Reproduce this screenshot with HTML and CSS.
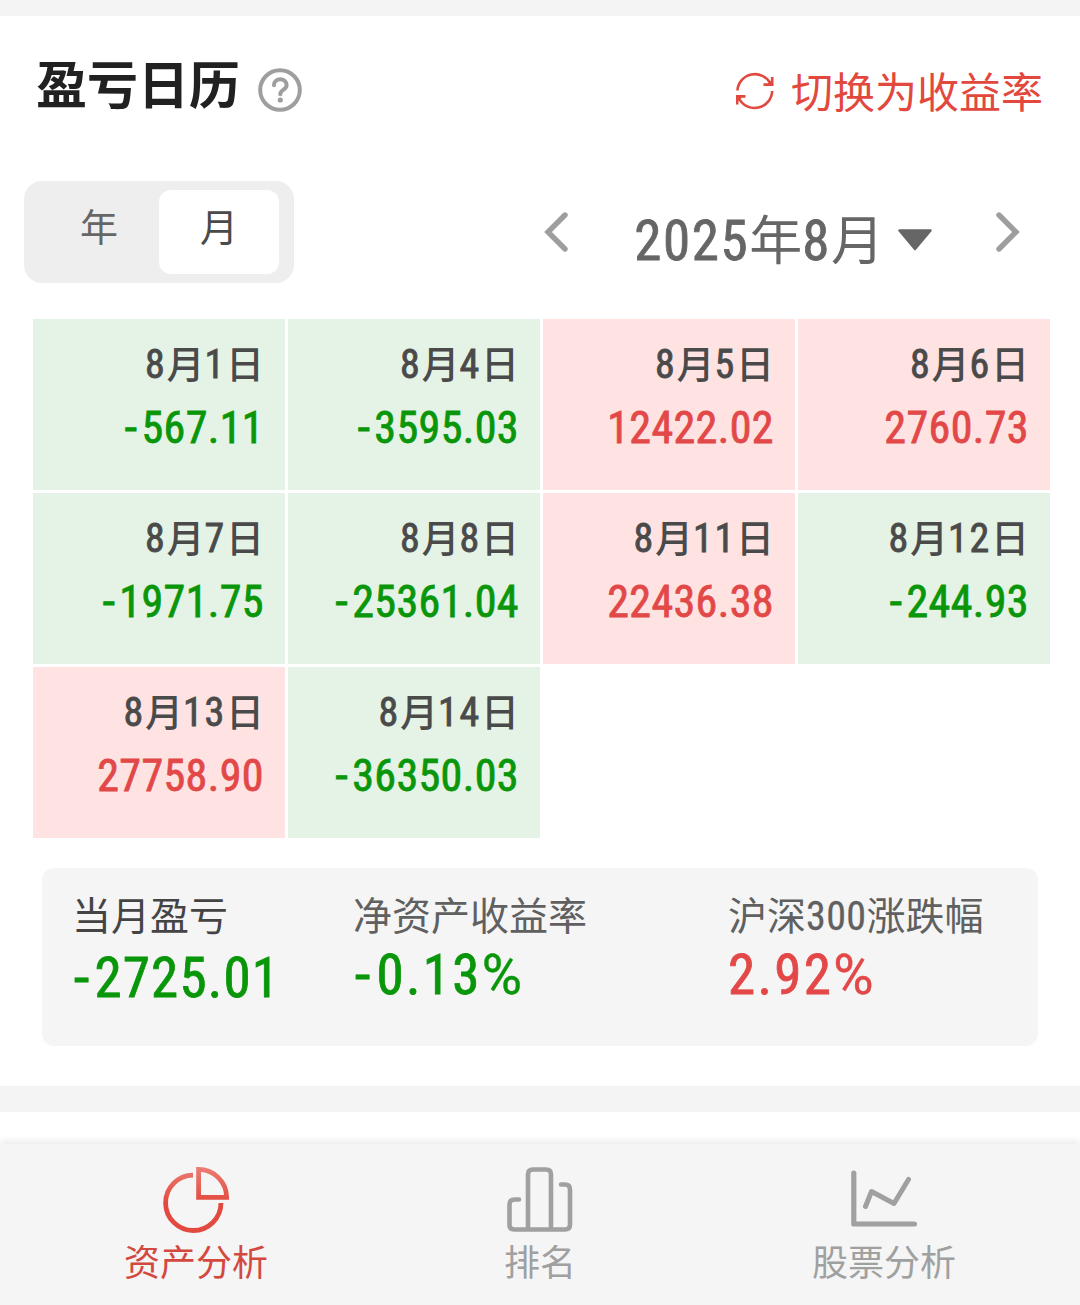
FILE: index.html
```html
<!DOCTYPE html>
<html lang="zh-CN">
<head>
  <meta charset="UTF-8">
  <meta name="viewport" content="width=device-width, initial-scale=1.0">
  <title>盈亏日历</title>
  <link rel="stylesheet" href="styles.css">
</head>
<body>
  <main class="card">
    <header class="card-header">
      <h1>盈亏日历</h1>
      <svg class="help-icon" viewBox="0 0 44 44" fill="none" stroke="#9e9e9e">
        <circle cx="22" cy="22" r="19.8" stroke-width="4"/>
        <path d="M16 17.2C16 9.4 28.6 9.4 28.6 17.2C28.6 21.8 22.3 21.4 22.3 26.2" stroke-width="4" stroke-linecap="round"/>
        <circle cx="22.3" cy="32" r="2.6" fill="#9e9e9e" stroke="none"/>
      </svg>
      <a class="switch-rate">
        <svg class="switch-icon" viewBox="0 0 38 38" fill="none" stroke="#e2483d" stroke-width="2.6">
          <path d="M1.4 18.5A17.6 17.6 0 0 1 34.5 11.5M36.2 5V12.6H27.5"/>
          <path d="M36.2 19A17.6 17.6 0 0 1 3 26.5M1.2 32.5V24.4H9.5"/>
          <path d="M36.2 7.5V12.6H30.5ZM1.2 29.8V24.4H7Z" fill="#e2483d" stroke="none"/>
        </svg>
        <span>切换为收益率</span>
      </a>
    </header>

    <div class="toolbar">
      <div class="segment">
        <button class="segment-item">年</button>
        <button class="segment-item active">月</button>
      </div>
      <div class="month-picker">
        <svg class="arrow" viewBox="0 0 24 40"><path d="M21 3L4 20L21 37"/></svg>
        <div class="month"><span class="num">2025</span>年<span class="num">8</span>月</div>
        <svg class="caret" viewBox="0 0 34 22"><path d="M1.5 1.5H32.5L17 20Z"/></svg>
        <svg class="arrow" viewBox="0 0 24 40"><path d="M3 3L20 20L3 37"/></svg>
      </div>
    </div>

    <div class="calendar">
      <div class="day loss">
        <div class="date"><span class="num">8</span>月<span class="num">1</span>日</div>
        <div class="amount"><span class="sign">-</span>567.11</div>
      </div>
      <div class="day loss">
        <div class="date"><span class="num">8</span>月<span class="num">4</span>日</div>
        <div class="amount"><span class="sign">-</span>3595.03</div>
      </div>
      <div class="day gain">
        <div class="date"><span class="num">8</span>月<span class="num">5</span>日</div>
        <div class="amount">12422.02</div>
      </div>
      <div class="day gain">
        <div class="date"><span class="num">8</span>月<span class="num">6</span>日</div>
        <div class="amount">2760.73</div>
      </div>
      <div class="day loss">
        <div class="date"><span class="num">8</span>月<span class="num">7</span>日</div>
        <div class="amount"><span class="sign">-</span>1971.75</div>
      </div>
      <div class="day loss">
        <div class="date"><span class="num">8</span>月<span class="num">8</span>日</div>
        <div class="amount"><span class="sign">-</span>25361.04</div>
      </div>
      <div class="day gain">
        <div class="date"><span class="num">8</span>月<span class="num">11</span>日</div>
        <div class="amount">22436.38</div>
      </div>
      <div class="day loss">
        <div class="date"><span class="num">8</span>月<span class="num">12</span>日</div>
        <div class="amount"><span class="sign">-</span>244.93</div>
      </div>
      <div class="day gain">
        <div class="date"><span class="num">8</span>月<span class="num">13</span>日</div>
        <div class="amount">27758.90</div>
      </div>
      <div class="day loss">
        <div class="date"><span class="num">8</span>月<span class="num">14</span>日</div>
        <div class="amount"><span class="sign">-</span>36350.03</div>
      </div>
    </div>

    <div class="summary">
      <div class="summary-item month-total loss">
        <div class="label">当月盈亏</div>
        <div class="total"><span class="sign">-</span>2725.01</div>
      </div>
      <div class="summary-item net-rate loss">
        <div class="label">净资产收益率</div>
        <div class="total rate"><span class="sign">-</span>0.13<span class="percent">%</span></div>
      </div>
      <div class="summary-item gain">
        <div class="label">沪深<span class="num">300</span>涨跌幅</div>
        <div class="total rate">2.92<span class="percent">%</span></div>
      </div>
    </div>
  </main>

  <nav class="tabbar">
    <a class="tab active">
      <svg viewBox="0 0 66 66" fill="none" stroke="url(#pieRed)" stroke-width="4.8">
        <defs>
          <linearGradient id="pieRed" gradientUnits="userSpaceOnUse" x1="0" y1="0" x2="0" y2="66">
            <stop offset="0" stop-color="#ec7d73"/>
            <stop offset="0.55" stop-color="#e2493f"/>
            <stop offset="1" stop-color="#e2493f"/>
          </linearGradient>
        </defs>
        <path d="M30 8.1A27.7 27.7 0 1 0 58 36"/>
        <path d="M35.6 2.4C51 2.4 63.6 15 63.6 30.4H35.6Z"/>
      </svg>
      <span>资产分析</span>
    </a>
    <a class="tab">
      <svg viewBox="0 0 66 66" fill="none" stroke="#a0a0a0" stroke-width="4.6" stroke-linecap="round">
        <path d="M12 32.5H7.5Q2.5 32.5 2.5 37.5V57.5Q2.5 62.5 7.5 62.5H58Q63 62.5 63 57.5V22.5Q63 17.5 58 17.5H54"/>
        <path d="M21 62V7.5Q21 2.5 26 2.5H39Q44 2.5 44 7.5V62"/>
      </svg>
      <span>排名</span>
    </a>
    <a class="tab">
      <svg viewBox="0 0 66 66" fill="none" stroke="#a0a0a0" stroke-width="5.2" stroke-linecap="round" stroke-linejoin="round">
        <path d="M2.8 6V57H63.5"/>
        <path d="M14.5 39.5L20.5 24.5L43 36.5L57.5 12.5" stroke-width="5"/>
      </svg>
      <span>股票分析</span>
    </a>
  </nav>
</body>
</html>
```

FILE: styles.css
```css
/* General styles */
* {
  margin: 0;
  padding: 0;
  box-sizing: border-box;
}

body {
  width: 1080px;
  height: 1305px;
  display: flex;
  flex-direction: column;
  overflow: hidden;
  background-color: #fff;
  font-family: "Noto Sans CJK SC", sans-serif;
}

svg {
  display: block;
  flex: none;
}

.num,
.amount,
.total {
  font-family: Roboto, sans-serif;
  font-stretch: 75%;
  font-weight: 400;
  -webkit-text-stroke: 0.8px currentColor;
}

.sign {
  margin-right: 4px;
  font-stretch: 100%;
}

.percent {
  font-stretch: 100%;
  -webkit-text-stroke-width: 0.4px;
}

/* Card */
.card {
  height: 1112px;
  border-top: 16px solid #f4f4f4;
  border-bottom: 26px solid #f4f4f4;
}

.card-header {
  display: flex;
  align-items: center;
  height: 150px;
  padding: 0 37px 0 36px;
}

h1 {
  font-size: 51px;
  line-height: 76px;
  font-weight: 700;
  color: #212121;
  margin-bottom: 19px;
}

.help-icon {
  width: 44px;
  height: 44px;
  margin: 0 0 2px 18px;
}

.switch-rate {
  display: flex;
  align-items: center;
  gap: 17px;
  margin-left: auto;
  font-size: 42px;
  line-height: 60px;
  color: #e2483d;
}

.switch-rate span {
  margin-bottom: 3px;
}

.switch-icon {
  width: 38px;
  height: 38px;
}

/* Year / month switch and month picker */
.toolbar {
  display: flex;
  justify-content: space-between;
  height: 102px;
  margin-top: 15px;
  padding: 0 60px 0 24px;
}

.segment {
  display: flex;
  width: 270px;
  padding: 9px 15px;
  border-radius: 18px;
  background-color: #eee;
}

.segment-item {
  flex: 1;
  padding-bottom: 14px;
  border: none;
  border-radius: 12px;
  background: none;
  font-family: inherit;
  font-size: 38px;
  line-height: 56px;
  color: #666;
}

.segment-item.active {
  background-color: #fff;
  color: #4a4a4a;
}

.month-picker {
  display: flex;
  align-items: center;
}

.arrow {
  width: 24px;
  height: 40px;
  fill: none;
  stroke: #9e9e9e;
  stroke-width: 5.4;
  stroke-linecap: round;
}

.month {
  margin-left: 66px;
  padding-top: 13px;
  font-size: 53px;
  line-height: 76px;
  color: #666;
  white-space: nowrap;
}

.month .num {
  font-size: 55px;
  letter-spacing: 1.6px;
}

.caret {
  width: 34px;
  height: 22px;
  margin: 16px 64px 0 14px;
  fill: #666;
  stroke: #666;
  stroke-width: 2.5;
  stroke-linejoin: round;
}

/* Calendar grid */
.calendar {
  display: grid;
  grid-template-columns: repeat(4, 252px);
  grid-auto-rows: 171px;
  gap: 3px;
  margin: 36px 0 0 33px;
}

.day {
  padding: 15px 21px 0 0;
  text-align: right;
}

.day.loss {
  background-color: #e4f3e5;
}

.day.gain {
  background-color: #fee3e2;
}

.date {
  height: 58px;
  font-size: 38px;
  line-height: 56px;
  font-weight: 500;
  color: #4a4a4a;
}

.date .num {
  font-size: 40px;
  letter-spacing: 1.7px;
}

.amount {
  font-size: 44px;
  line-height: 72px;
  letter-spacing: 0.4px;
}

.loss .amount,
.loss .total {
  color: #0a960a;
}

.gain .amount,
.gain .total {
  color: #e34848;
}

/* Month summary */
.summary {
  display: flex;
  height: 178px;
  margin: 30px 42px 0;
  padding: 17px 0 0 30px;
  border-radius: 12px;
  background-color: #f5f5f5;
}

.month-total {
  width: 281px;
}

.net-rate {
  width: 375px;
}

.label {
  height: 58px;
  font-size: 39px;
  line-height: 56px;
  color: #606060;
  white-space: nowrap;
}

.month-total .label {
  color: #444;
}

.label .num {
  font-size: 40px;
  letter-spacing: 0.4px;
  -webkit-text-stroke-width: 0.3px;
}

.total {
  font-size: 55px;
  line-height: 64px;
  letter-spacing: 1.2px;
}

.total .sign {
  margin-left: 2px;
}

.total.rate {
  letter-spacing: 2.3px;
}

.month-total .total {
  padding-top: 3px;
}

/* Bottom tab bar */
.tabbar {
  display: flex;
  height: 161px;
  margin-top: 32px;
  padding: 23px 24px 0;
  background-color: #f5f5f5;
  box-shadow: 0 -2px 8px rgba(0, 0, 0, 0.1);
}

.tab {
  flex: 1;
  display: flex;
  flex-direction: column;
  align-items: center;
  font-size: 36px;
  line-height: 54px;
  color: #a0a0a0;
}

.tab svg {
  width: 66px;
  height: 66px;
}

.tab.active {
  color: #d4493f;
}
```
